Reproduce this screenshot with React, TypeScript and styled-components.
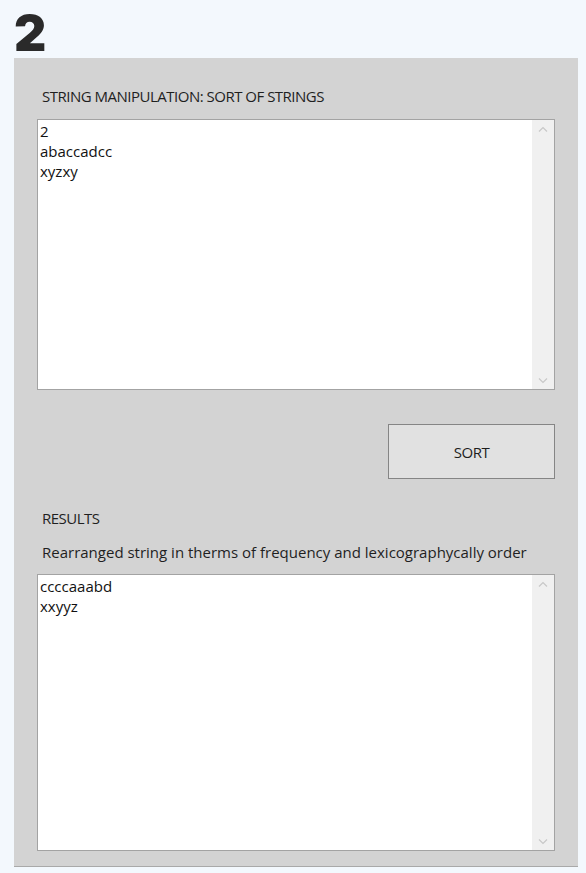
import React from 'react';
import styled, { createGlobalStyle } from 'styled-components';

const GlobalStyle = createGlobalStyle`
  html, body {
    margin: 0;
    padding: 0;
    background: #f3f8fd;
  }
  body {
    font-family: "Open Sans", "Noto Sans", sans-serif;
    color: #1e1e1e;
  }
`;

const Page = styled.div`
  width: 586px;
  height: 873px;
  display: flex;
  flex-direction: column;
`;

const Number = styled.h1`
  margin: 9px 0 0 14px;
  height: 49px;
  font-family: Inter, "Roboto", sans-serif;
  font-weight: 900;
  font-size: 50px;
  line-height: 49px;
  color: #2a2a2a;
  letter-spacing: -1px;
`;

const Panel = styled.section`
  margin: 0 8px 0 14px;
  padding: 28px 23px 15px;
  background: #d3d3d3;
  border-bottom: 1px solid #a9a9a9;
  display: flex;
  flex-direction: column;
`;

const Label = styled.div<{ $gap?: number; $caps?: boolean }>`
  font-size: 15px;
  line-height: 20px;
  padding-left: 5px;
  margin-top: ${(p) => p.$gap ?? 0}px;
  letter-spacing: ${(p) => (p.$caps ? '-0.5px' : '0')};
  color: #1f1f1f;
  white-space: nowrap;
`;

const Box = styled.div<{ $height: number; $gap: number }>`
  margin-top: ${(p) => p.$gap}px;
  height: ${(p) => p.$height}px;
  box-sizing: border-box;
  border: 1px solid #a3a3a3;
  background: #fff;
  display: flex;
`;

const BoxText = styled.div`
  flex: 1;
  padding: 1px 2px;
  font-size: 15px;
  line-height: 20px;
  white-space: pre;
  color: #111;
`;

const Track = styled.div`
  width: 22px;
  background: #f0f0f0;
  display: flex;
  flex-direction: column;
  justify-content: space-between;
  align-items: center;
  padding: 6px 0 5px;
`;

const Chevron = ({ up }: { up?: boolean }) => (
  <svg width="10" height="6" viewBox="0 0 10 6">
    <path
      d={up ? 'M1 5.5 L5 1.5 L9 5.5' : 'M1 0.5 L5 4.5 L9 0.5'}
      fill="none"
      stroke="#c8c8c8"
      strokeWidth="1.2"
    />
  </svg>
);

const ButtonRow = styled.div`
  display: flex;
  justify-content: flex-end;
  margin-top: 34px;
`;

const SortButton = styled.button`
  width: 167px;
  height: 55px;
  box-sizing: border-box;
  border: 1px solid #858585;
  background: #e1e1e1;
  font-family: "Open Sans", "Noto Sans", sans-serif;
  font-size: 15px;
  letter-spacing: -0.5px;
  color: #1e1e1e;
  padding: 0;
`;

const TextBox = ({ lines, height, gap }: { lines: string[]; height: number; gap: number }) => (
  <Box $height={height} $gap={gap}>
    <BoxText>{lines.join('\n')}</BoxText>
    <Track>
      <Chevron up />
      <Chevron />
    </Track>
  </Box>
);

export default function App() {
  return (
    <Page>
      <GlobalStyle />
      <Number>2</Number>
      <Panel>
        <Label $caps>STRING MANIPULATION: SORT OF STRINGS</Label>
        <TextBox lines={['2', 'abaccadcc', 'xyzxy']} height={271} gap={13} />
        <ButtonRow>
          <SortButton>SORT</SortButton>
        </ButtonRow>
        <Label $caps $gap={29}>RESULTS</Label>
        <Label $gap={14}>Rearranged string in therms of frequency and lexicographycally order</Label>
        <TextBox lines={['ccccaaabd', 'xxyyz']} height={277} gap={12} />
      </Panel>
    </Page>
  );
}
